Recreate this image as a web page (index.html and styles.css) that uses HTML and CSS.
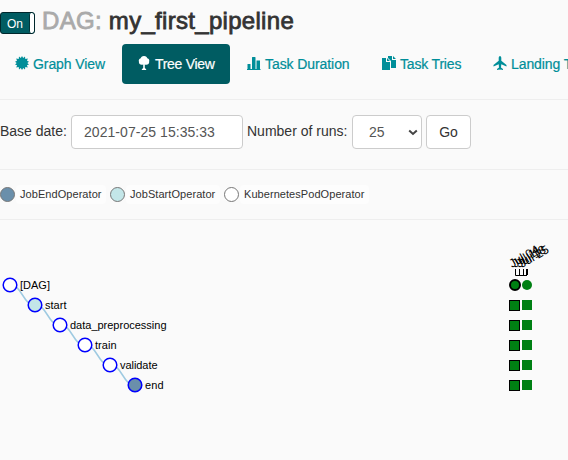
FILE: index.html
```html
<!DOCTYPE html>
<html lang="en">
<head>
<meta charset="utf-8">
<title>my_first_pipeline</title>
<link rel="stylesheet" href="styles.css">
</head>
<body>
<header class="heading">
  <span class="toggle"><span class="toggle-label">On</span><span class="toggle-handle"></span></span>
  <h3 class="title"><span class="muted">DAG:</span> my_first_pipeline</h3>
</header>
<nav class="tabs">
  <a class="tab graph"><svg class="icon" viewBox="0 0 14 14"><path d="M7 0l1.200 2L10 .6l.3 2.400 2.500-.4-.8 2.200 2 .9L12.300 7l1.700 1.500-2.100.7.9 2.200-2.500-.3-.3 2.400-1.800-1.400L7 14l-1.200-1.900L4 13.500l-.3-2.400-2.500.3.9-2.200L0 8.500 1.700 7 0 5.700l2-.9-.8-2.200 2.500.4L4 .6 5.800 2z"/></svg><span>Graph View</span></a>
  <a class="tab tree active"><svg class="icon" viewBox="0 0 14 14"><path d="M7 0c2.100 0 3 1.200 3.300 2.200C12 2.700 12.600 4 12.200 5.200 12.500 7.500 11 8.800 9.200 8.800c-.6 0-1-.1-1.400-.4V12l1.400 1.200v.8H4.800v-.8L6.200 12V8.400C4 9.500 1.500 8 1.900 5.400 1.400 4 2.200 2.700 3.700 2.200 4 1.200 4.900 0 7 0z"/></svg><span>Tree View</span></a>
  <a class="tab duration"><svg class="icon" viewBox="0 0 14 14"><path d="M.5 8h3v5h-3zM5 1.500Q5 1 5.500 1h2.500q.5 0 .5.500V13H5zM9.500 4.500h3.500V13H9.500zM0 13h13.500v1H0z"/></svg><span>Task Duration</span></a>
  <a class="tab tries"><svg class="icon" viewBox="0 0 14 14"><path d="M0 2h4v4h4v8H0zM5 2l3 3H5zM6 0h4v4h4v8H9V5L6 2zM11 0l3 3h-3z"/></svg><span>Task Tries</span></a>
  <a class="tab landing"><svg class="icon" viewBox="0 0 14 14"><path d="M7 0c.8 0 1.300 1 1.300 2v2.800L13.500 9v1.500L8.300 8.200 8 11.500l2 1.500v1l-2.600-.6L7 14l-.4-.6L4 14v-1l2-1.500-.3-3.300L.5 10.500V9l5.200-4.200V2C5.700 1 6.200 0 7 0z"/></svg><span>Landing Times</span></a>
</nav>
<form class="filters">
  <label class="base-label">Base date:</label>
  <input class="control date" type="text" value="2021-07-25 15:35:33">
  <label class="runs-label">Number of runs:</label>
  <span class="control select">25<svg class="chevron" viewBox="0 0 10 7"><path d="M1.200 1.500L5 5l3.800-3.500"/></svg></span>
  <button class="control go" type="button">Go</button>
</form>
<section class="legend">
  <span class="dot end"></span><span class="operator op-end">JobEndOperator</span>
  <span class="dot start"></span><span class="operator op-start">JobStartOperator</span>
  <span class="dot pod"></span><span class="operator op-pod">KubernetesPodOperator</span>
</section>
<svg class="diagram" width="568" height="240" viewBox="0 220 568 240">
  <g class="links">
    <path d="M10 285C22.500 285 22.500 305 35 305"/><path d="M35 305C47.500 305 47.500 325 60 325"/><path d="M60 325C72.500 325 72.500 345 85 345"/><path d="M85 345C97.500 345 97.500 365 110 365"/><path d="M110 365C122.500 365 122.500 385 135 385"/>
  </g>
  <g class="nodes">
    <circle cx="10" cy="285" r="6.800"/><circle class="fill-start" cx="35" cy="305" r="6.800"/><circle cx="60" cy="325" r="6.800"/><circle cx="85" cy="345" r="6.800"/><circle cx="110" cy="365" r="6.800"/><circle class="fill-end" cx="135" cy="385" r="6.800"/>
  </g>
  <g class="names">
    <text x="20" y="289" textLength="30">[DAG]</text><text x="45" y="309" textLength="21.500">start</text><text x="70" y="329" textLength="96.500">data_preprocessing</text><text x="95" y="349" textLength="21.500">train</text><text x="120" y="369" textLength="37.500">validate</text><text x="145" y="389" textLength="18.500">end</text>
  </g>
  <g class="dates">
    <text transform="translate(512 268) rotate(-30)">Jul 04</text><text transform="translate(515 268) rotate(-30)">Jul 11</text><text transform="translate(519 268) rotate(-30)">Jul 18</text><text transform="translate(522 268) rotate(-30)">Jul 25</text>
  </g>
  <path class="axis" d="M515.500 269v6.500H527M519.500 269v6M523.500 269v6M526.500 269v6M527.500 269v6"/>
  <g class="runs">
    <circle class="outlined" cx="515" cy="285" r="5"/><circle cx="527" cy="285" r="5"/>
    <rect class="outlined" x="509.500" y="300.500" width="10" height="10"/><rect x="522" y="300" width="10" height="10"/>
    <rect class="outlined" x="509.500" y="320.500" width="10" height="10"/><rect x="522" y="320" width="10" height="10"/>
    <rect class="outlined" x="509.500" y="340.500" width="10" height="10"/><rect x="522" y="340" width="10" height="10"/>
    <rect class="outlined" x="509.500" y="360.500" width="10" height="10"/><rect x="522" y="360" width="10" height="10"/>
    <rect class="outlined" x="509.500" y="380.500" width="10" height="10"/><rect x="522" y="380" width="10" height="10"/>
  </g>
</svg>
</body>
</html>
```

FILE: styles.css
```css
* { box-sizing: border-box; }
body { margin: 0; width: 568px; height: 460px; overflow: hidden; background: #fafafa; color: #333; font: 14px/20px "Liberation Sans", Arial, sans-serif; }
.heading { height: 44px; display: flex; align-items: flex-start; }
.toggle { display: flex; flex: none; width: 35px; height: 22px; margin-top: 12px; border: 1px solid #00272c; border-radius: 3px; background: #005c62; overflow: hidden; color: #fff; font-size: 12px; line-height: 22px; }
.toggle-label { width: 28px; text-align: center; }
.toggle-handle { flex: 1; border-left: 1px solid #00373c; background: #fff; border-radius: 2px; }
.title { margin: 7px 0 0 7px; font-size: 24px; line-height: 27px; font-weight: 400; white-space: nowrap; letter-spacing: .3px; -webkit-text-stroke: .8px currentColor; }
.muted { color: #aaa; }
.tabs { height: 56px; display: flex; gap: 2px; border-bottom: 1px solid #eee; overflow: hidden; }
.tab { flex: none; display: flex; align-items: flex-start; height: 40px; padding: 10px 0 0 15px; border-radius: 4px; color: #008e99; white-space: nowrap; letter-spacing: -.08px; -webkit-text-stroke: .2px currentColor; }
.icon { width: 14px; height: 14px; margin: 2px 4px 0 0; fill: currentColor; stroke: none; }
.graph { width: 120px; }
.tree { width: 108px; letter-spacing: -.3px; }
.duration { width: 133px; }
.tries { width: 109px; letter-spacing: -.18px; }
.landing { width: 140px; }
.active { background: #005c62; color: #fff; }
.filters { height: 70px; padding-top: 15px; display: flex; border-bottom: 1px solid #eee; white-space: nowrap; }
.filters label { line-height: 33px; }
.base-label { width: 71px; }
.runs-label { width: 105px; }
.control { height: 34px; border: 1px solid #ccc; border-radius: 4px; background: #fff; font: 14px/32px "Liberation Sans", Arial, sans-serif; color: #555; }
.date { width: 172px; margin-right: 4px; padding: 0 12px; letter-spacing: .05px; }
.select { display: flex; justify-content: space-between; align-items: center; width: 70px; margin-right: 4px; padding: 0 3px 0 16px; }
.chevron { width: 10px; height: 7px; fill: none; stroke: #444; stroke-width: 2; }
.go { width: 45px; padding: 0; color: #333; }
.legend { height: 50px; display: flex; align-items: center; border-bottom: 1px solid #eee; font-size: 11px; line-height: 18px; }
.dot { width: 15px; height: 15px; flex: none; border: 1px solid #777; border-radius: 50%; }
.operator { height: 19px; padding: 0 4px; margin-left: 1px; border-radius: 4px; background: #fdfdfd; white-space: nowrap; letter-spacing: .06px; }
.op-end { width: 90px; margin-right: 4px; }
.op-start { width: 94px; margin-right: 4px; }
.end { background: #6a8fab; }
.start { background: #c3e6e8; }
.pod { background: #fff; }
.diagram { display: block; }
.links path { fill: none; stroke: #9ecae1; stroke-width: 1.5; }
.nodes circle { fill: #fff; stroke: #00f; stroke-width: 1.5; }
.nodes .fill-start { fill: #c3e6e8; }
.nodes .fill-end { fill: #6a8fab; }
.names, .dates { font-size: 11px; fill: #000; }
.dates { font-size: 12px; }
.axis { fill: none; stroke: #000; }
.runs { fill: #008013; }
.runs .outlined { stroke: #000; }
.runs circle.outlined { stroke-width: 2; }
```
